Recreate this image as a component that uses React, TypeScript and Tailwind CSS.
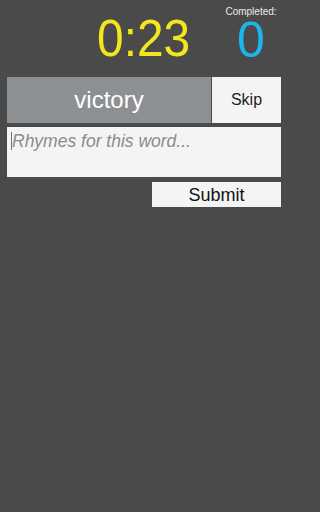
import React from "react";

export default function App() {
  return (
    <div className="w-full min-h-[512px] bg-[#4a4a4a]">
      <div
        className="w-[288px] h-[512px] bg-[#4a4a4a] overflow-hidden"
        style={{ fontFamily: '"Liberation Sans", Arial, sans-serif' }}
      >
        {/* header */}
        <div className="h-[77px] grid grid-cols-[1fr_auto_1fr]">
          <div />
          <div className="pt-[12px]">
            <div className="text-[52px] leading-none text-[#f3e71c] scale-x-[0.92]">0:23</div>
          </div>
          <div className="flex justify-end pr-[7px]">
            <div className="w-[60px] flex flex-col items-center pt-[7px]">
              <div className="text-[10px] leading-[10px] text-[#ececec]">Completed:</div>
              <div className="mt-[3px] text-[50px] leading-[40px] text-[#1bb7ea]">0</div>
            </div>
          </div>
        </div>

        <div className="px-[7px] flex flex-col">
          {/* word row */}
          <div className="h-[46px] flex gap-px">
            <div className="flex-1 bg-[#8d9093] flex items-center justify-center text-white text-[24px] leading-none">
              victory
            </div>
            <button className="w-[69px] bg-[#f4f4f4] flex items-center justify-center text-[16px] text-[#1e1e1e] leading-none">
              Skip
            </button>
          </div>

          {/* input */}
          <div className="relative mt-[4px] h-[50px] bg-[#f4f4f4]">
            <textarea
              className="w-full h-full resize-none bg-transparent outline-none pl-[5px] pt-[4px] text-[17.5px] leading-[20px] italic text-[#333] placeholder:text-[#8c8c8c]"
              style={{ fontFamily: '"Liberation Sans", Arial, sans-serif' }}
              placeholder="Rhymes for this word..."
            />
            <span className="absolute left-[4px] top-[5px] w-px h-[18px] bg-[#6f6f6f]" />
          </div>

          {/* submit */}
          <div className="mt-[5px] flex justify-end">
            <button className="w-[129px] h-[25px] bg-[#f4f4f4] text-[18px] leading-none text-[#111] flex items-center justify-center">
              Submit
            </button>
          </div>
        </div>
      </div>
    </div>
  );
}
